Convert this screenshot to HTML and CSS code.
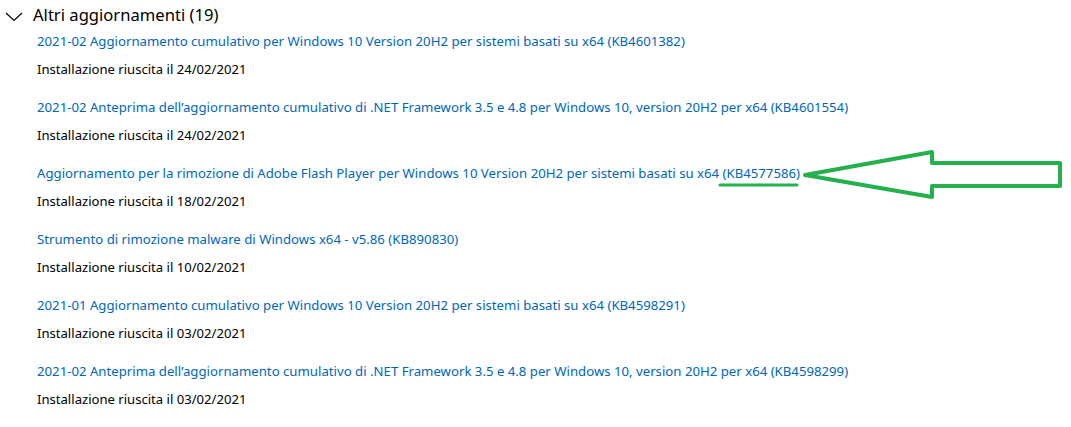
FILE: index.html
```html
<!DOCTYPE html>
<html lang="it">
<head>
<meta charset="utf-8">
<title>Altri aggiornamenti</title>
<link rel="stylesheet" href="styles.css">
</head>
<body>
<div class="page">
  <div class="header">
    <svg class="chevron" width="18" height="10" viewBox="0 0 18 10"><path d="M1 1 L9 8.5 L17 1" fill="none" stroke="#000" stroke-width="1.2"/></svg>
    <h2 class="title">Altri aggiornamenti (19)</h2>
  </div>
  <ul class="list">
    <li class="item"><a class="link">2021-02 Aggiornamento cumulativo per Windows 10 Version 20H2 per sistemi basati su x64 (KB4601382)</a><span class="status">Installazione riuscita il 24/02/2021</span></li>
    <li class="item"><a class="link">2021-02 Anteprima dell’aggiornamento cumulativo di .NET Framework 3.5 e 4.8 per Windows 10, version 20H2 per x64 (KB4601554)</a><span class="status">Installazione riuscita il 24/02/2021</span></li>
    <li class="item"><a class="link">Aggiornamento per la rimozione di Adobe Flash Player per Windows 10 Version 20H2 per sistemi basati su x64 (KB4577586)</a><span class="status">Installazione riuscita il 18/02/2021</span></li>
    <li class="item"><a class="link">Strumento di rimozione malware di Windows x64 - v5.86 (KB890830)</a><span class="status">Installazione riuscita il 10/02/2021</span></li>
    <li class="item"><a class="link">2021-01 Aggiornamento cumulativo per Windows 10 Version 20H2 per sistemi basati su x64 (KB4598291)</a><span class="status">Installazione riuscita il 03/02/2021</span></li>
    <li class="item"><a class="link">2021-02 Anteprima dell’aggiornamento cumulativo di .NET Framework 3.5 e 4.8 per Windows 10, version 20H2 per x64 (KB4598299)</a><span class="status">Installazione riuscita il 03/02/2021</span></li>
  </ul>
  <svg class="annotation" width="1071" height="427" viewBox="0 0 1071 427">
    <path d="M720 185 L797 185" stroke="#22b14c" stroke-width="3" stroke-linecap="round" fill="none"/>
    <path d="M805 175 L932 152 L932 163 L1060 163 L1060 186 L932 186 L932 197 Z" stroke="#22b14c" stroke-width="4" stroke-linejoin="round" fill="none"/>
  </svg>
</div>
</body>
</html>
```

FILE: styles.css
```css
html, body {
  margin: 0;
  padding: 0;
  background: #ffffff;
}
.page {
  position: relative;
  width: 1071px;
  height: 427px;
  overflow: hidden;
  font-family: "Noto Sans", "Open Sans", sans-serif;
  color: #000;
}
.header {
  display: flex;
  align-items: center;
  gap: 10px;
  padding: 2px 0 0 5px;
  height: 26px;
}
.chevron {
  display: block;
  margin-top: 4px;
}
.title {
  margin: 0;
  font-size: 16.6px;
  font-weight: 400;
  line-height: 26px;
}
.list {
  list-style: none;
  margin: 0;
  padding: 4px 0 0 37px;
  display: flex;
  flex-direction: column;
  gap: 19px;
}
.item {
  display: flex;
  flex-direction: column;
  gap: 9px;
}
.link {
  color: #0067b8;
  font-size: 13.2px;
  line-height: 19px;
}
.status {
  font-size: 13.1px;
  line-height: 19px;
}
.annotation {
  position: absolute;
  left: 0;
  top: 0;
  pointer-events: none;
}
```
